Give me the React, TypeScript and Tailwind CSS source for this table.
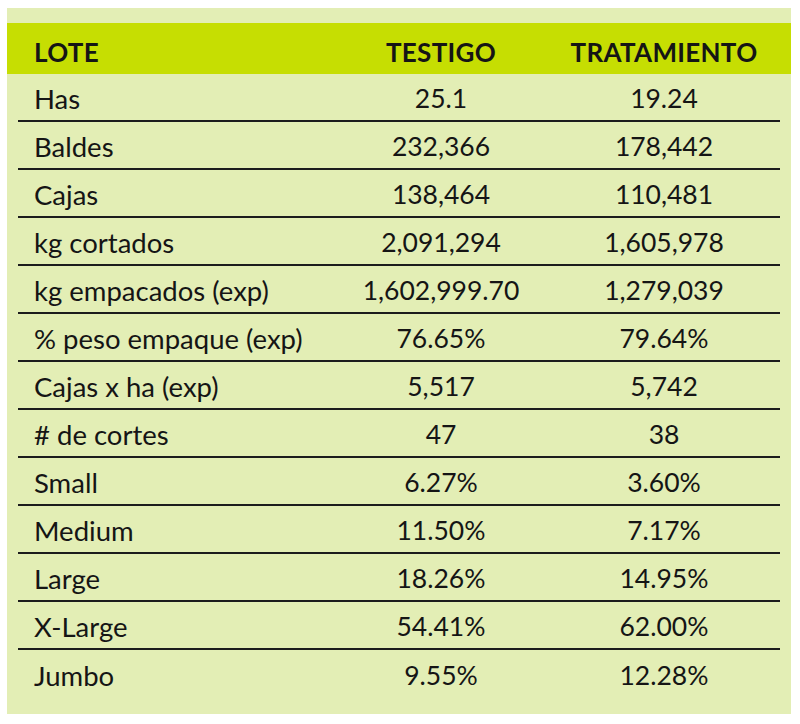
const rows: [string, string, string][] = [
  ["Has", "25.1", "19.24"],
  ["Baldes", "232,366", "178,442"],
  ["Cajas", "138,464", "110,481"],
  ["kg cortados", "2,091,294", "1,605,978"],
  ["kg empacados (exp)", "1,602,999.70", "1,279,039"],
  ["% peso empaque (exp)", "76.65%", "79.64%"],
  ["Cajas x ha (exp)", "5,517", "5,742"],
  ["# de cortes", "47", "38"],
  ["Small", "6.27%", "3.60%"],
  ["Medium", "11.50%", "7.17%"],
  ["Large", "18.26%", "14.95%"],
  ["X-Large", "54.41%", "62.00%"],
  ["Jumbo", "9.55%", "12.28%"],
];

export default function App() {
  return (
    <div className="w-[800px] h-[724px] bg-white pt-[8px] pl-[7px] font-['Lato',sans-serif] text-[#151515]">
      <div className="w-[784px] h-[706px] bg-[#e3eeb5] pt-[15px]">
        {/* Header */}
        <div className="h-[51px] bg-[#c6de02] px-[11px] pt-[8px] grid grid-cols-[312px_222px_224px] items-center text-[26px] font-bold tracking-[0.3px]">
          <span className="pl-[16px]">LOTE</span>
          <span className="text-center">TESTIGO</span>
          <span className="text-center">TRATAMIENTO</span>
        </div>

        {/* Rows */}
        <div className="px-[11px]">
          {rows.map(([label, testigo, tratamiento], i) => (
            <div
              key={label}
              className={`h-[48px] grid grid-cols-[312px_222px_224px] items-center pt-[4px] ${
                i < rows.length - 1 ? "border-b-2 border-[#1c1c1c]" : ""
              }`}
            >
              <span className="pl-[16px] text-[27.5px]">{label}</span>
              <span className="text-center text-[26.5px]">{testigo}</span>
              <span className="text-center text-[26.5px]">{tratamiento}</span>
            </div>
          ))}
        </div>
      </div>
    </div>
  );
}
